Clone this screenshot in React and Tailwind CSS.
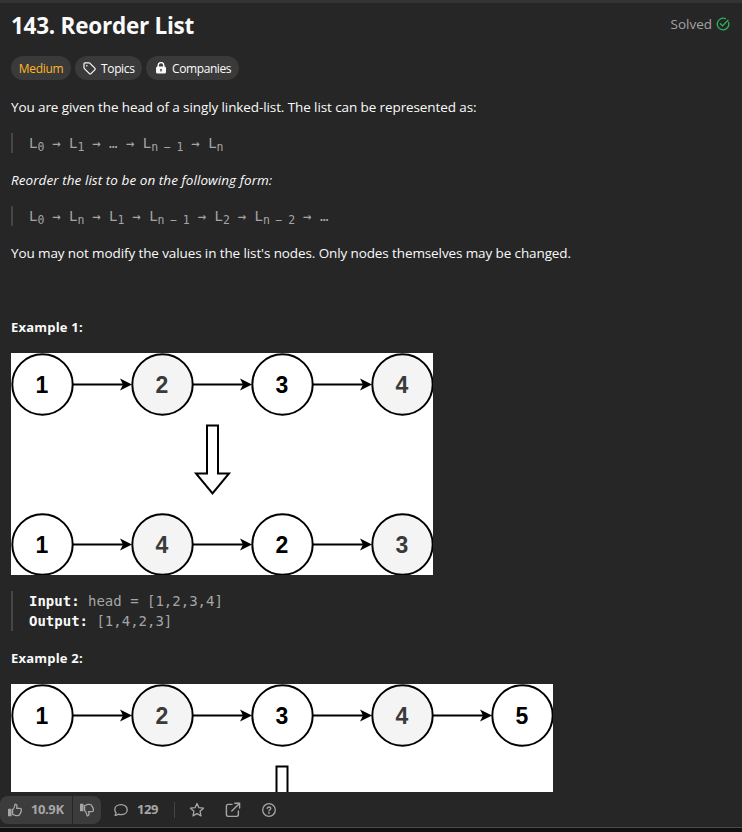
import React from "react";

const ICON = "shrink-0 fill-none stroke-current";
const SANS = "font-['Open_Sans','Noto_Sans',sans-serif]";
const MONO = "font-['DejaVu_Sans_Mono',monospace]";

function Node({ x, y, label, shaded }) {
  return (
    <g>
      <circle cx={x} cy={y} r="30.2" fill={shaded ? "#f4f4f4" : "#fff"} stroke="#000" strokeWidth="2" />
      <text x={x - 0.5} y={y + 8} textAnchor="middle" fill={shaded ? "#3a3a3a" : "#000"} className="font-['Liberation_Sans',sans-serif] text-[23px] font-bold">
        {label}
      </text>
    </g>
  );
}

function Chain({ values, y }) {
  return (
    <g>
      {values.slice(1).map((_, i) => {
        const x = 31.5 + i * 120;
        return (
          <g key={i}>
            <path d={`M${x + 30} ${y}H${x + 83}`} stroke="#000" strokeWidth="2" />
            <path d={`M${x + 89.5} ${y}l-12 -6l3 6l-3 6z`} fill="#000" />
          </g>
        );
      })}
      {values.map((v, i) => (
        <Node key={i} x={31.5 + i * 120} y={y} label={v} shaded={i % 2 === 1} />
      ))}
    </g>
  );
}

function Sub({ children }) {
  return <span className="relative top-[3px] text-[11.5px] tracking-[-0.6px]">{children}</span>;
}

function Quote({ className, children }) {
  return (
    <div className={`h-5 whitespace-pre border-l-2 border-[#464646] pl-4 text-sm leading-5 text-[#a5a5a5] ${MONO} ${className}`}>
      {children}
    </div>
  );
}

function ThumbUp({ className }) {
  return (
    <svg viewBox="0 0 14 14" className={`size-3.5 ${ICON} ${className}`} strokeWidth="1.3" strokeLinejoin="round" strokeLinecap="round">
      <path d="M0.6 6.3h2.3v6.4H0.6z" fill="currentColor" />
      <path d="M4.6 6.6c1.6-1.2 2-2.5 2.2-4.3.1-.9.6-1.2 1.2-1 1.2.4 1.3 1.7.6 4h3.2c1.5 0 1.9 1.3 1.4 2.1.3.9 0 1.6-.6 2 0 .9-.3 1.4-.9 1.7-.2 1-.8 1.5-1.9 1.5H8.4c-1.6 0-2.4-.7-3.8-1.3z" />
    </svg>
  );
}

export default function App() {
  return (
    <div className={`flex h-[832px] w-[742px] flex-col overflow-hidden bg-[#262626] text-[#fafafa] ${SANS}`}>
      <div className="h-[3px] shrink-0 bg-[#333]" />
      <main className="flex h-[789px] shrink-0 flex-col overflow-hidden pl-[11px]">
        <div className="flex h-[53px] shrink-0 justify-between pr-[12px]">
          <h1 className="pt-[7px] text-[22.5px] leading-8 font-bold tracking-[-0.25px] whitespace-nowrap">143. Reorder List</h1>
          <div className="mt-[11px] flex h-5 items-center gap-1 text-[13.5px] text-[#a3a3a3]">
            <span>Solved</span>
            <svg viewBox="0 0 14 14" className={`size-3.5 text-[#2cb55d] ${ICON}`} strokeWidth="1.3" strokeLinecap="round" strokeLinejoin="round">
              <path d="M12.6 5.4A5.8 5.8 0 1 1 9.3 1.7" />
              <path d="M4.4 6.8l2.1 2.1L12 3.2" />
            </svg>
          </div>
        </div>
        <div className="flex h-6 shrink-0 gap-1 text-[12px] whitespace-nowrap">
          <div className="flex w-[60px] items-center justify-center rounded-full bg-[#3a3a3a] text-[#ffb822]">
            <span className="pt-px tracking-[-0.3px]">Medium</span>
          </div>
          <div className="flex w-[67px] items-center gap-[5px] rounded-full bg-[#3a3a3a] pl-2">
            <svg viewBox="0 0 13 13" className={`size-[13px] ${ICON}`} strokeWidth="1.2" strokeLinejoin="round">
              <path d="M1 1.8V5.6c0 .4.1.7.4 1l5 5c.5.5 1.1.5 1.6 0l3.8-3.8c.5-.5.5-1.1 0-1.6l-5-5C6.5.9 6.2.8 5.8.8H2C1.4.8 1 1.2 1 1.8z" />
              <circle cx="3.8" cy="3.7" r=".8" fill="currentColor" stroke="none" />
            </svg>
            <span className="pt-px tracking-[-0.35px]">Topics</span>
          </div>
          <div className="flex w-[93px] items-center gap-[5px] rounded-full bg-[#3a3a3a] pl-[9px]">
            <svg viewBox="0 0 12 12" className="size-3 shrink-0">
              <path d="M3.2 5V3.4a2.8 2.8 0 0 1 5.6 0V5" fill="none" stroke="currentColor" strokeWidth="1.5" />
              <rect x="1" y="4.6" width="10" height="7" rx="1.5" fill="currentColor" />
              <path d="M6 7.3v1.6" stroke="#3a3a3a" strokeWidth="1.3" strokeLinecap="round" />
            </svg>
            <span className="pt-px tracking-[-0.4px]">Companies</span>
          </div>
        </div>

        <div className="flex flex-col text-[13.5px] leading-5 whitespace-nowrap">
          <p className="mt-[17px] h-5 tracking-[-0.1px]">You are given the head of a singly linked-list. The list can be represented as:</p>
          <Quote className="mt-4">L<Sub>0</Sub> → L<Sub>1</Sub> → … → L<Sub>n − 1</Sub> → L<Sub>n</Sub></Quote>
          <p className="mt-[17px] h-5 tracking-[0.06px] italic">Reorder the list to be on the following form:</p>
          <Quote className="mt-4">L<Sub>0</Sub> → L<Sub>n</Sub> → L<Sub>1</Sub> → L<Sub>n − 1</Sub> → L<Sub>2</Sub> → L<Sub>n − 2</Sub> → …</Quote>
          <p className="mt-[17px] h-5 tracking-[-0.11px]">You may not modify the values in the list's nodes. Only nodes themselves may be changed.</p>
          <p className="mt-[54px] h-5 text-[13px] font-bold tracking-[0.2px]">Example 1:</p>
        </div>

        <svg width="422" height="222" className="mt-4 shrink-0 bg-white">
          <Chain values={[1, 2, 3, 4]} y={31.5} />
          <path d="M196 72.5h11v48h11l-16.5 20l-16.5 -20h11z" fill="#fff" stroke="#000" strokeWidth="2" />
          <Chain values={[1, 4, 2, 3]} y={191.5} />
        </svg>

        <pre className={`mt-4 h-10 shrink-0 border-l-2 border-[#464646] pl-4 text-sm leading-5 text-[#a5a5a5] ${MONO}`}>
          <b className="text-[#fafafa]">Input:</b> head = [1,2,3,4]{"\n"}
          <b className="text-[#fafafa]">Output:</b> [1,4,2,3]
        </pre>
        <p className="mt-[17px] h-5 shrink-0 text-[13px] leading-5 font-bold tracking-[0.2px]">Example 2:</p>
        <svg width="542" height="222" className="mt-4 shrink-0 bg-white">
          <Chain values={[1, 2, 3, 4, 5]} y={31.5} />
          <path d="M265.5 82.5h11v48h11l-16.5 20l-16.5 -20h11z" fill="#fff" stroke="#000" strokeWidth="2" />
        </svg>
      </main>

      <footer className="flex h-[35px] shrink-0 items-center pt-[1px] text-[13px] font-bold text-[#a6a6a6]">
        <div className="flex h-7 w-[101px] shrink-0 overflow-hidden rounded-lg bg-[#3c3c3c]">
          <div className="flex w-[73px] items-center gap-[9px] border-r border-[#262626] pl-2">
            <ThumbUp className="" />
            <span className="tracking-[-0.4px]">10.9K</span>
          </div>
          <div className="flex items-center pl-[7px]">
            <ThumbUp className="-scale-y-100" />
          </div>
        </div>
        <svg viewBox="0 0 14 14" className={`ml-[13px] size-3.5 ${ICON}`} strokeWidth="1.3" strokeLinejoin="round">
          <path d="M7 1.7c3.5 0 6.2 2.1 6.2 5s-2.7 5-6.2 5c-1 0-2-.2-2.8-.5-.9.7-1.9 1.1-3.2 1.1.7-.8 1-1.5 1.1-2.3C1.3 9.1.8 8 .8 6.7c0-2.9 2.7-5 6.2-5z" />
        </svg>
        <span className="ml-[9px] w-[22px] tracking-[-0.4px]">129</span>
        <div className="ml-[15px] h-4 w-px bg-[#454545]" />
        <svg viewBox="0 0 16 16" className={`ml-[14px] size-4 ${ICON}`} strokeWidth="1.3" strokeLinejoin="round">
          <path d="M8 1.5l1.9 4.2 4.6.5-3.4 3.1.9 4.6L8 11.6l-4 2.3.9-4.6L1.5 6.2l4.6-.5z" />
        </svg>
        <svg viewBox="0 0 16 16" className={`ml-5 size-4 ${ICON}`} strokeWidth="1.4" strokeLinecap="round" strokeLinejoin="round">
          <path d="M7 2.4H3.2a1.8 1.8 0 0 0-1.8 1.8v8.4a1.8 1.8 0 0 0 1.8 1.8h8.4a1.8 1.8 0 0 0 1.8-1.8V9M9.8 1.2h4.8V6M14.4 1.4L6.8 9" />
        </svg>
        <svg viewBox="0 0 16 16" className={`ml-5 size-4 ${ICON}`} strokeWidth="1.3" strokeLinecap="round" strokeLinejoin="round">
          <circle cx="8" cy="8" r="6.3" />
          <path d="M6.2 6.5c0-2 3.6-2 3.6 0 0 1.2-1.8 1.2-1.8 2.4" />
          <circle cx="8" cy="11" r=".3" />
        </svg>
      </footer>
      <div className="h-px shrink-0 bg-[#4a4a4a]" />
      <div className="h-1 shrink-0 bg-[#101010]" />
    </div>
  );
}
